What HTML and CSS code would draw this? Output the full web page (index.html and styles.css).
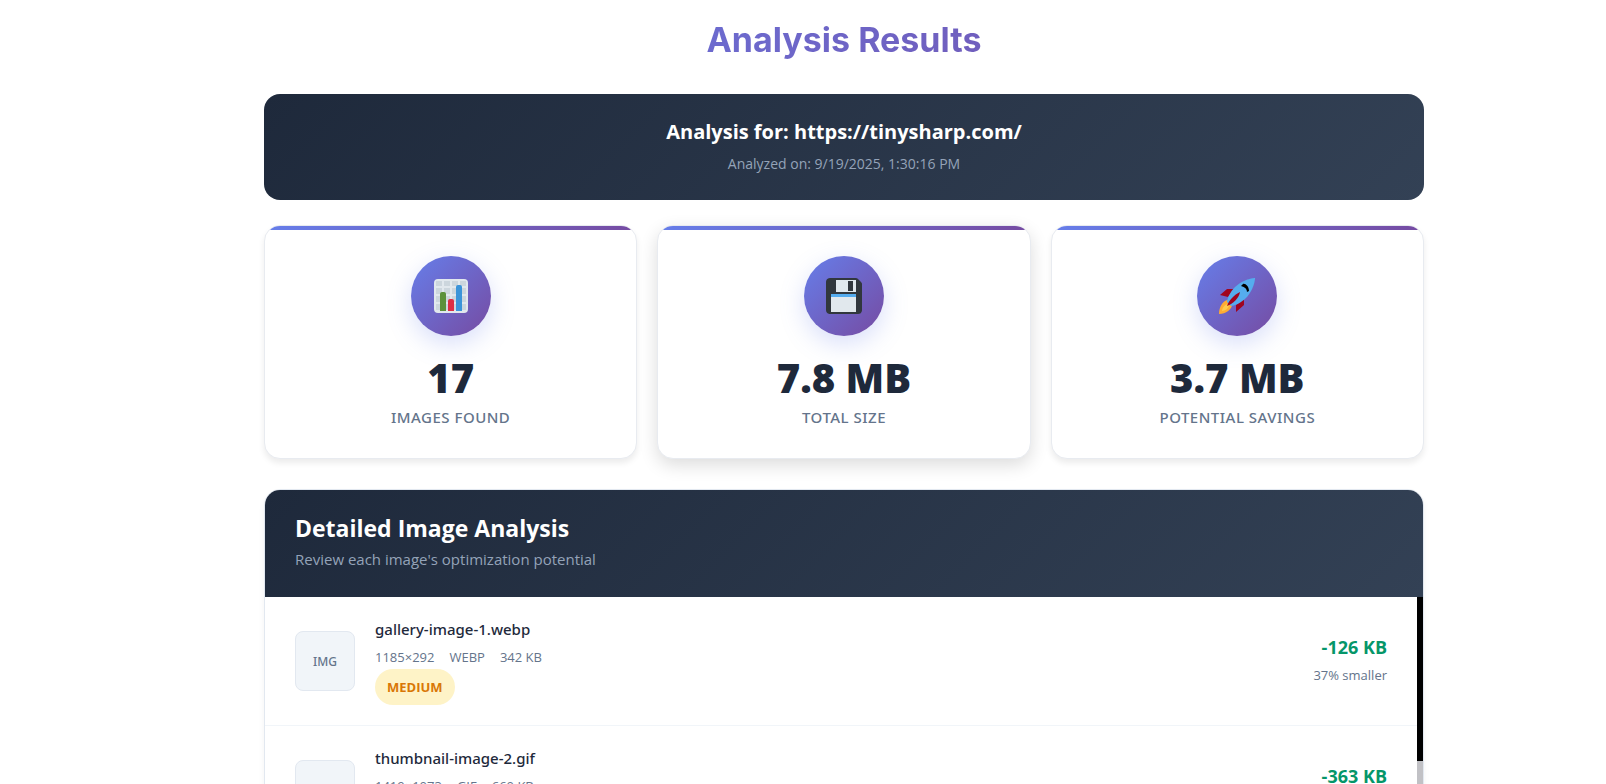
FILE: index.html
```html
<!DOCTYPE html>
<html lang="en">
<head>
<meta charset="utf-8">
<title>Analysis Results</title>
<link rel="stylesheet" href="styles.css">
</head>
<body>
<main class="results">
  <h1 class="results-title">Analysis Results</h1>

  <section class="banner">
    <h2 class="banner-title">Analysis for: https://tinysharp.com/</h2>
    <p class="banner-date">Analyzed on: 9/19/2025, 1:30:16 PM</p>
  </section>

  <section class="stats">
    <article class="stat">
      <div class="stat-icon">
        <svg viewBox="0 0 36 36" aria-hidden="true">
          <rect x="1" y="1" width="34" height="34" rx="4" fill="#e1e8ed"/>
          <path fill="#ccd6dd" d="M3 3h6v5H3zM11 3h6v5h-6zM19 3h6v5h-6zM27 3h6v5h-6zM3 10h6v6H3zM11 10h6v6h-6zM19 10h6v6h-6zM27 10h6v6h-6zM3 18h6v6H3zM11 18h6v6h-6zM19 18h6v6h-6zM27 18h6v6h-6zM3 26h6v6H3zM11 26h6v6h-6zM19 26h6v6h-6zM27 26h6v6h-6z"/>
          <path fill="#5c913b" d="M13 33H7V16a2 2 0 0 1 2-2h2a2 2 0 0 1 2 2z"/>
          <path fill="#3b94d9" d="M29 33h-6V9a2 2 0 0 1 2-2h2a2 2 0 0 1 2 2z"/>
          <path fill="#dd2e44" d="M21 33h-6V23a2 2 0 0 1 2-2h2a2 2 0 0 1 2 2z"/>
        </svg>
      </div>
      <div class="stat-value">17</div>
      <div class="stat-label">Images Found</div>
    </article>
    <article class="stat stat-raised">
      <div class="stat-icon">
        <svg viewBox="0 0 36 36" aria-hidden="true">
          <path fill="#31373d" d="M4 36s-4 0-4-4V4s0-4 4-4h26c1 0 2 1 2 1l3 3s1 1 1 2v26s0 4-4 4z"/>
          <path fill="#e1e8ed" d="M5 19v15h25V17H5z"/>
          <rect x="5" y="16" width="25" height="3" fill="#55acee"/>
          <rect x="10" y="2" width="20" height="12" fill="#e1e8ed"/>
          <rect x="22" y="3" width="5" height="10" fill="#31373d"/>
        </svg>
      </div>
      <div class="stat-value">7.8 MB</div>
      <div class="stat-label">Total Size</div>
    </article>
    <article class="stat">
      <div class="stat-icon">
        <svg viewBox="0 0 36 36" aria-hidden="true">
          <path fill="#a0041e" d="M1 17l7-6 7 0-6 8zM17 34l8-7 0-8-8 8z"/>
          <path fill="#ffac33" d="M9 22c-4 0-9 6-9 14 7 0 13-5 13-9 2-3-1-6-4-5z"/>
          <path fill="#ffcc4d" d="M9 26c-3 0-6 4-6 7 3 0 7-3 7-6z"/>
          <path fill="#55acee" d="M36 0s-10 0-20 9C11 14 8 21 8 24l4 4c3 0 10-3 15-8C36 10 36 0 36 0z"/>
          <path fill="#000" d="M24 6c2-1 6 2 6 7l-2 1c0-3-2-5-6-6z"/>
          <path fill="#a0041e" d="M8 28c2-6 7-11 13-14-1 6-7 12-13 14z"/>
        </svg>
      </div>
      <div class="stat-value">3.7 MB</div>
      <div class="stat-label">Potential Savings</div>
    </article>
  </section>

  <section class="panel">
    <header class="panel-head">
      <h3 class="panel-title">Detailed Image Analysis</h3>
      <p class="panel-sub">Review each image's optimization potential</p>
    </header>
    <div class="panel-body">
      <ul class="images">
        <li class="image">
          <div class="thumb">IMG</div>
          <div class="info">
            <div class="name">gallery-image-1.webp</div>
            <div class="meta"><span>1185×292</span><span>WEBP</span><span>342 KB</span></div>
            <span class="badge">Medium</span>
          </div>
          <div class="savings">
            <div class="saved">-126 KB</div>
            <div class="percent">37% smaller</div>
          </div>
        </li>
        <li class="image">
          <div class="thumb">IMG</div>
          <div class="info">
            <div class="name">thumbnail-image-2.gif</div>
            <div class="meta"><span>1419×1073</span><span>GIF</span><span>660 KB</span></div>
            <span class="badge">Medium</span>
          </div>
          <div class="savings">
            <div class="saved">-363 KB</div>
            <div class="percent">55% smaller</div>
          </div>
        </li>
      </ul>
      <div class="scroll-track"><div class="scroll-thumb"></div></div>
    </div>
  </section>
</main>
</body>
</html>
```
FILE: styles.css
```css
* { box-sizing: border-box; }

html { scrollbar-width: none; }

body {
  margin: 0;
  height: 100vh;
  overflow: hidden;
  padding: 0 0 0 82px;
  background: #fff;
  color: #1e293b;
  font-family: "Open Sans", "Noto Sans", sans-serif;
}

h1, h2, h3, p, ul { margin: 0; padding: 0; }

.results {
  max-width: 1160px;
  margin: 0 auto;
  padding-top: 16px;
}

.results-title {
  margin-bottom: 30px;
  font-family: Inter, sans-serif;
  font-size: 34px;
  line-height: 48px;
  font-weight: 700;
  text-align: center;
  color: transparent;
  background: linear-gradient(135deg, #667eea, #764ba2);
  background-clip: text;
  -webkit-background-clip: text;
}

.banner {
  padding: 20px 24px 22px;
  border-radius: 16px;
  background: linear-gradient(135deg, #1e293b, #334155);
  text-align: center;
}

.banner-title {
  font-size: 20px;
  line-height: 36px;
  font-weight: 700;
  color: #fff;
}

.banner-date {
  font-size: 14px;
  line-height: 28px;
  color: #94a3b8;
}

.stats {
  display: grid;
  grid-template-columns: repeat(3, 1fr);
  gap: 20px;
  margin: 25px 0 30px;
}

.stat {
  position: relative;
  overflow: hidden;
  display: flex;
  flex-direction: column;
  align-items: center;
  padding: 30px 24px 28px;
  border: 1px solid #e8ebf0;
  border-radius: 16px;
  background: #fff;
  box-shadow: 0 4px 6px rgba(0, 0, 0, 0.08);
}

.stat::before {
  content: "";
  position: absolute;
  top: 0;
  left: 0;
  right: 0;
  height: 4px;
  background: linear-gradient(90deg, #667eea, #764ba2);
}

.stat-raised { box-shadow: 0 6px 18px rgba(0, 0, 0, 0.14); }

.stat-icon {
  display: grid;
  place-items: center;
  width: 80px;
  height: 80px;
  margin-bottom: 16px;
  border-radius: 50%;
  background: linear-gradient(135deg, #667eea, #764ba2);
  box-shadow: 0 8px 24px rgba(102, 126, 234, 0.25);
}

.stat-icon svg { width: 36px; height: 36px; }

.stat-value {
  font-size: 40px;
  line-height: 52px;
  font-weight: 800;
}

.stat-label {
  font-family: "Noto Sans", sans-serif;
  font-size: 15px;
  line-height: 26px;
  font-weight: 500;
  letter-spacing: 0.5px;
  text-transform: uppercase;
  color: #64748b;
}

.panel {
  overflow: hidden;
  border: 1px solid #e2e8f0;
  border-radius: 16px;
  background: #fff;
  box-shadow: 0 4px 6px rgba(0, 0, 0, 0.05);
}

.panel-head {
  padding: 20px 30px 25px;
  background: linear-gradient(135deg, #1e293b, #334155);
}

.panel-title {
  font-size: 23px;
  line-height: 36px;
  font-weight: 700;
  color: #fff;
}

.panel-sub {
  font-size: 15px;
  line-height: 26px;
  color: #94a3b8;
}

.panel-body { display: flex; }

.images {
  flex: 1;
  list-style: none;
}

.image {
  display: flex;
  align-items: center;
  gap: 20px;
  padding: 20px 30px;
  border-bottom: 1px solid #f1f5f9;
}

.thumb {
  display: grid;
  place-items: center;
  width: 60px;
  height: 60px;
  border: 1px solid #e2e8f0;
  border-radius: 8px;
  background: #f1f5f9;
  font-family: "Noto Sans", sans-serif;
  font-size: 12px;
  font-weight: 500;
  color: #64748b;
}

.info { flex: 1; }

.name {
  margin-bottom: 4px;
  font-family: "Noto Sans", sans-serif;
  font-size: 15px;
  line-height: 24px;
  font-weight: 500;
}

.meta {
  display: flex;
  gap: 15px;
  font-size: 13px;
  line-height: 24px;
  color: #64748b;
}

.badge {
  display: inline-block;
  padding: 6px 12px;
  border-radius: 20px;
  background: #fef3c7;
  font-size: 13px;
  line-height: 24px;
  font-weight: 700;
  text-transform: uppercase;
  color: #d97706;
}

.savings { text-align: right; }

.saved {
  font-size: 18px;
  line-height: 28px;
  font-weight: 700;
  color: #059669;
}

.percent {
  font-size: 13px;
  line-height: 28px;
  color: #64748b;
}

.scroll-track {
  width: 6px;
  padding-top: 164px;
  background: #000;
}

.scroll-thumb {
  height: 100%;
  background: #c1c1c5;
}
```
